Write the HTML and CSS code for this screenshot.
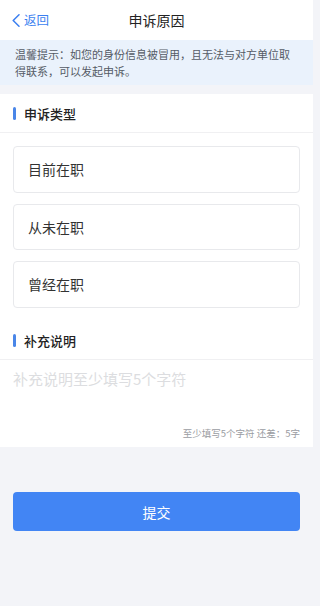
FILE: index.html
```html
<!DOCTYPE html>
<html lang="zh-CN">
<head>
<meta charset="utf-8">
<title>申诉原因</title>
<link rel="stylesheet" href="styles.css">
</head>
<body>
<header class="header">
  <a class="back" href="#">
    <svg class="chev" width="8" height="13" viewBox="0 0 8 13"><polyline points="7,0.8 1.2,6.5 7,12.2" fill="none" stroke="#3b7ff0" stroke-width="1.5" stroke-linejoin="round" stroke-linecap="round"/></svg>
    <span>返回</span>
  </a>
  <h1 class="title">申诉原因</h1>
  <span></span>
</header>
<div class="notice">温馨提示：如您的身份信息被冒用，且无法与对方单位取得联系，可以发起申诉。</div>
<main class="section">
  <div class="sec-head"><i class="bar"></i><span>申诉类型</span></div>
  <div class="options">
    <div class="option">目前在职</div>
    <div class="option">从未在职</div>
    <div class="option">曾经在职</div>
  </div>
  <div class="sec-head"><i class="bar"></i><span>补充说明</span></div>
  <div class="remark">
    <textarea class="input" placeholder="补充说明至少填写5个字符"></textarea>
    <div class="counter">至少填写5个字符 还差：5字</div>
  </div>
</main>
<div class="actions">
  <button class="submit">提交</button>
</div>
</body>
</html>
```
FILE: styles.css
```css
* { box-sizing: border-box; }
html, body { margin: 0; padding: 0; }
html { background: #f3f4f8; }
body {
  background: #f3f4f8;
  font-family: "Noto Sans CJK SC", "Noto Sans", sans-serif;
  color: #333;
  width: 313px;
  min-height: 606px;
}
.header {
  height: 40px;
  background: #fff;
  display: grid;
  grid-template-columns: 1fr auto 1fr;
  align-items: center;
  padding: 0 12px;
}
.back {
  display: flex;
  align-items: center;
  gap: 4px;
  color: #3b7ff0;
  text-decoration: none;
  font-size: 12.5px;
  line-height: 1;
}
.chev { display: block; }
.title {
  margin: 0;
  font-size: 14px;
  font-weight: 400;
  color: #222;
}
.notice {
  background: #eaf2fc;
  color: #555b66;
  font-size: 11px;
  line-height: 17px;
  padding: 6px 13px 5px 15px;
}
.section {
  margin-top: 9px;
  background: #fff;
}
.sec-head {
  height: 39px;
  display: flex;
  align-items: center;
  gap: 8px;
  padding-left: 13px;
  border-bottom: 1px solid #f0f0f2;
  font-size: 13px;
  font-weight: 500;
  color: #222;
}
.bar {
  width: 3px;
  height: 13px;
  border-radius: 1.5px;
  background: #4a86e8;
}
.options {
  padding: 13px 13px 13.5px 13px;
  display: flex;
  flex-direction: column;
  gap: 11px;
}
.option {
  height: 46.5px;
  border: 1px solid #e8e9ec;
  border-radius: 4px;
  display: flex;
  align-items: center;
  padding-left: 14px;
  font-size: 14px;
  color: #333;
}
.remark {
  padding: 10px 13px 8px 13px;
}
.input {
  display: block;
  width: 100%;
  height: 57px;
  border: 0;
  outline: none;
  resize: none;
  padding: 0;
  margin: 0;
  font-family: inherit;
  font-size: 15px;
  line-height: 18px;
  color: #333;
  background: transparent;
}
.input::placeholder { color: #dcdde0; }
.counter {
  text-align: right;
  font-size: 9.5px;
  line-height: 12px;
  color: #9a9ca2;
}
.actions {
  padding: 45px 13px 0 13px;
}
.submit {
  display: block;
  width: 100%;
  height: 39px;
  border: 0;
  border-radius: 4px;
  background: #4285f4;
  color: #fff;
  font-family: inherit;
  font-size: 14px;
}
```
